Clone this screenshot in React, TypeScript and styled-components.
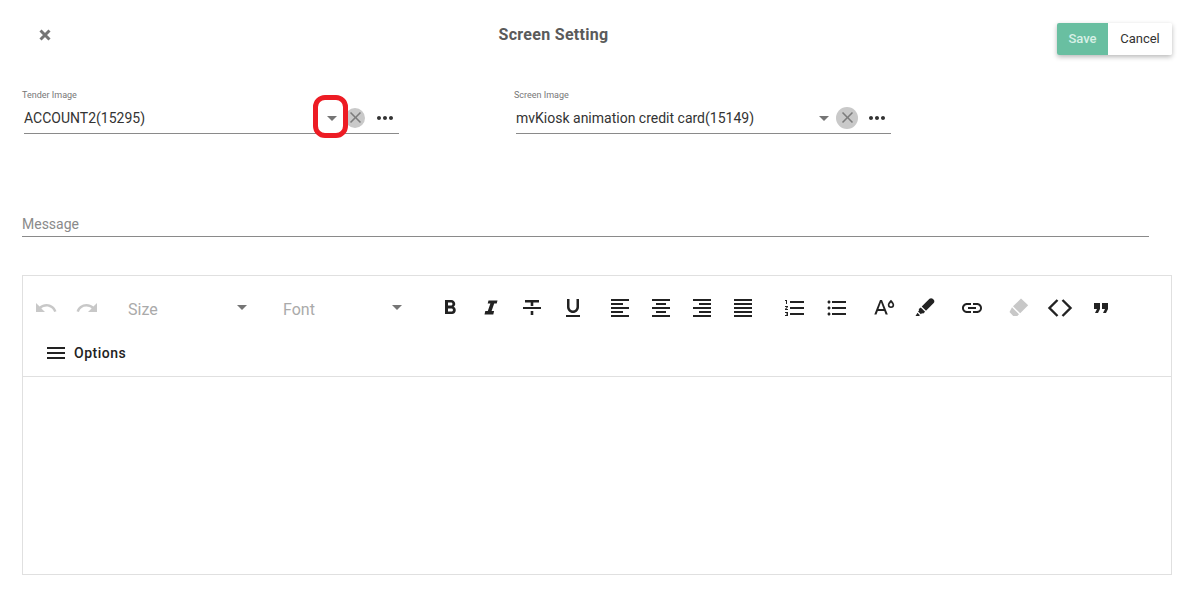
import React from "react";
import styled, { createGlobalStyle } from "styled-components";
import {
  MdClose, MdArrowDropDown, MdMoreHoriz, MdUndo, MdRedo, MdFormatBold,
  MdFormatUnderlined, MdFormatAlignLeft, MdFormatAlignCenter, MdFormatAlignRight, MdFormatAlignJustify,
  MdFormatListNumbered, MdFormatListBulleted, MdLink, MdFormatQuote, MdMenu,
} from "react-icons/md";

const Global = createGlobalStyle`
  html, body { margin: 0; padding: 0; background: #fff; }
  body { font-family: Roboto, "Liberation Sans", sans-serif; width: 1192px; height: 607px; overflow: hidden; }
`;

const Page = styled.div`
  width: 1192px; height: 607px; padding: 23px 20px 32px 22px; box-sizing: border-box;
  display: flex; flex-direction: column;
`;
const Header = styled.header`
  display: flex; align-items: flex-start; height: 32px;
`;
const CloseBtn = styled.div`
  width: 28px; height: 24px; display: flex; align-items: center; justify-content: center; color: #757575;
  padding-left: 17px; box-sizing: border-box;
  svg { flex: none; }
`;
const Title = styled.h1`
  flex: 1; margin: 0; padding-top: 1px; text-align: center; font-size: 16px; line-height: 22px; font-weight: 700; color: #5a5a5a;
  letter-spacing: .3px;
`;
const ButtonGroup = styled.div`
  display: flex; height: 32px; border-radius: 2px; box-shadow: 0 2px 5px rgba(0,0,0,.28);
`;
const GroupBtn = styled.button<{ $primary?: boolean }>`
  border: 0; padding: 0 0 2px; font-family: inherit; font-size: 13px; height: 32px;
  width: ${p => (p.$primary ? 51 : 64)}px;
  background: ${p => (p.$primary ? "#69bfa1" : "#fff")};
  color: ${p => (p.$primary ? "#d8f0e6" : "#333")};
  font-weight: ${p => (p.$primary ? 500 : 400)};
  border-radius: ${p => (p.$primary ? "2px 0 0 2px" : "0 2px 2px 0")};
`;
const FieldRow = styled.div`
  display: flex; gap: 115px; margin-top: 34px;
`;
const Field = styled.div`
  width: 377px; position: relative;
`;
const FieldLabel = styled.label`
  display: block; font-size: 9px; line-height: 12px; color: #777;
`;
const Control = styled.div`
  margin: 5px 0 0 2px; height: 27px; display: flex; align-items: center; border-bottom: 1px solid #8a8a8a;
`;
const Value = styled.div`
  flex: 1; font-size: 14px; color: #333; line-height: 20px; padding-bottom: 4px; white-space: nowrap;
`;
const Arrow = styled.span`
  display: flex; color: #757575; font-size: 24px; width: 24px; justify-content: center; margin-bottom: 3px;
`;
const ClearBubble = styled.span<{ $large?: boolean }>`
  width: ${p => (p.$large ? 22 : 20)}px; height: ${p => (p.$large ? 22 : 20)}px;
  margin: 0 ${p => (p.$large ? 0 : 1)}px 4px ${p => (p.$large ? 0 : 1)}px;
  border-radius: 50%; background: #c9c9c9; color: #7c7c7c; display: flex; align-items: center; justify-content: center;
  font-size: 19px;
`;
const More = styled.span`
  display: flex; justify-content: center; width: 28px; margin-left: 5px; font-size: 24px; color: #333; margin-bottom: 4px;
`;
const RedRing = styled.span`
  position: absolute; left: 291px; top: 6px; width: 35px; height: 43px; box-sizing: border-box;
  border: 5px solid #ed1c24; border-radius: 12px;
`;
const MessageField = styled.div`
  margin-top: 72px; width: 1127px; height: 31px; box-sizing: border-box; border-bottom: 1px solid #8a8a8a;
  font-size: 14px; color: #8a8a8a; line-height: 20px; padding-top: 8px;
`;
const Editor = styled.section`
  margin-top: 38px; flex: 1; border: 1px solid #e0e0e0; display: flex; flex-direction: column;
`;
const Toolbar = styled.div`
  height: 100px; border-bottom: 1px solid #e0e0e0; display: flex; flex-direction: column;
`;
const ToolRow = styled.div`
  height: 40px; margin-top: 12px; display: flex; align-items: center;
`;
const ToolIcon = styled.span<{ $w: number; $off?: boolean; $gap?: number }>`
  width: ${p => p.$w}px; margin-left: ${p => p.$gap ?? 0}px; display: flex; justify-content: center; flex: none;
  font-size: 24px; color: ${p => (p.$off ? "#c8c8c8" : "#222")};
`;
const Dropdown = styled.div<{ $w: number; $gap: number }>`
  width: ${p => p.$w}px; margin-left: ${p => p.$gap}px; flex: none; display: flex; align-items: center; justify-content: space-between;
  font-size: 16px; color: #aaa; padding-top: 3px; box-sizing: border-box;
  svg { color: #757575; font-size: 24px; margin-top: -5px; }
`;
const OptionsRow = styled.div`
  display: flex; align-items: center; gap: 6px; padding-left: 21px; margin-top: 9px; height: 32px;
  font-size: 14px; font-weight: 500; color: #222; letter-spacing: .5px;
  svg { font-size: 24px; }
`;
const Body = styled.div`flex: 1;`;

const HeavyClose = () => (
  <svg width="14" height="14" viewBox="0 0 14 14" fill="none" stroke="currentColor" strokeWidth="3">
    <path d="M2.500 2.500l9 9M11.500 2.500l-9 9" />
  </svg>
);
const ItalicIcon = () => (
  <svg width="24" height="24" viewBox="0 0 24 24" fill="currentColor">
    <path d="M9.500 4.500h9l-.8 3h-2.500l-2.600 7.500h2.500l-.8 3.500H5.500l.8-3.500h2.500l2.600-7.500H8.700z" />
  </svg>
);
const StrikeIcon = () => (
  <svg width="24" height="24" viewBox="0 0 24 24" fill="currentColor">
    <path d="M5 4h14v2.400h-5.700V10h-2.600V6.400H5V4zM3 11h18v2H3v-2zM10.700 15h2.600v4h-2.600v-4z" />
  </svg>
);
const FontColorIcon = () => (
  <svg width="24" height="24" viewBox="0 0 24 24" fill="currentColor">
    <path d="M8 4h2l5.800 14.500h-2.200l-1.300-3.600H5.800l-1.300 3.600H2.300L8 4zm-1.500 9h5L9 6.300 6.500 13z" />
    <path d="M19 3.800s-3.200 3-3.200 5a3.200 3.200 0 0 0 6.400 0c0-2-3.200-5-3.200-5zm0 6.600a1.600 1.600 0 0 1-1.600-1.600c0-.6.800-1.600 1.600-2.400.8.800 1.600 1.800 1.600 2.400a1.600 1.600 0 0 1-1.600 1.600z" />
  </svg>
);
const MarkerIcon = () => (
  <svg width="24" height="24" viewBox="0 0 24 24" fill="currentColor">
    <path d="M16.500 2.800c.9-.9 2.300-.9 3.200 0l1 1c.9.9.9 2.300 0 3.200L13 14.800 8.700 10.500l7.800-7.700zM7.800 11.500l4.300 4.300-1.800 1.800-1.400-.3-1 1-2.900-2.900 1-1-.2-1.400 2-1.500zM4.500 16.800l2.400 2.400-.8.800H2.500l2-3.200z" />
  </svg>
);
const EraserIcon = () => (
  <svg width="24" height="24" viewBox="0 0 24 24" fill="currentColor">
    <path d="M14 2.500l7.200 6.800-8 8L6 10.300l8-7.800zM5 11.300l7 7-1.700 1.700H6.200L2.500 16l2.500-4.700z" />
  </svg>
);
const CodeIcon = () => (
  <svg width="26" height="24" viewBox="0 0 26 24" fill="none" stroke="currentColor" strokeWidth="2.400">
    <path d="M10.500 4l-8 8 8 8M15.500 4l8 8-8 8" />
  </svg>
);

const Picker = ({ label, value, large, ring }: { label: string; value: string; large?: boolean; ring?: boolean }) => (
  <Field>
    <FieldLabel>{label}</FieldLabel>
    <Control>
      <Value>{value}</Value>
      <Arrow><MdArrowDropDown /></Arrow>
      <ClearBubble $large={large}><MdClose /></ClearBubble>
      <More><MdMoreHoriz /></More>
    </Control>
    {ring && <RedRing />}
  </Field>
);

export default function App() {
  return (
    <Page>
      <Global />
      <Header>
        <CloseBtn><HeavyClose /></CloseBtn>
        <Title>Screen Setting</Title>
        <ButtonGroup>
          <GroupBtn $primary>Save</GroupBtn>
          <GroupBtn>Cancel</GroupBtn>
        </ButtonGroup>
      </Header>
      <FieldRow>
        <Picker label="Tender Image" value="ACCOUNT2(15295)" ring />
        <Picker label="Screen Image" value="mvKiosk animation credit card(15149)" large />
      </FieldRow>
      <MessageField>Message</MessageField>
      <Editor>
        <Toolbar>
          <ToolRow>
            <ToolIcon $w={24} $gap={11} $off><MdUndo /></ToolIcon>
            <ToolIcon $w={24} $gap={17} $off><MdRedo /></ToolIcon>
            <Dropdown $w={126} $gap={29}>Size<MdArrowDropDown /></Dropdown>
            <Dropdown $w={126} $gap={29}>Font<MdArrowDropDown /></Dropdown>
            <ToolIcon $w={24} $gap={29}><MdFormatBold /></ToolIcon>
            <ToolIcon $w={24} $gap={17}><ItalicIcon /></ToolIcon>
            <ToolIcon $w={24} $gap={17}><StrikeIcon /></ToolIcon>
            <ToolIcon $w={24} $gap={17}><MdFormatUnderlined /></ToolIcon>
            <ToolIcon $w={24} $gap={23}><MdFormatAlignLeft /></ToolIcon>
            <ToolIcon $w={24} $gap={17}><MdFormatAlignCenter /></ToolIcon>
            <ToolIcon $w={24} $gap={17}><MdFormatAlignRight /></ToolIcon>
            <ToolIcon $w={24} $gap={17}><MdFormatAlignJustify /></ToolIcon>
            <ToolIcon $w={24} $gap={28}><MdFormatListNumbered /></ToolIcon>
            <ToolIcon $w={24} $gap={18}><MdFormatListBulleted /></ToolIcon>
            <ToolIcon $w={24} $gap={23}><FontColorIcon /></ToolIcon>
            <ToolIcon $w={24} $gap={17}><MarkerIcon /></ToolIcon>
            <ToolIcon $w={24} $gap={23}><MdLink /></ToolIcon>
            <ToolIcon $w={24} $gap={23} $off><EraserIcon /></ToolIcon>
            <ToolIcon $w={26} $gap={16}><CodeIcon /></ToolIcon>
            <ToolIcon $w={24} $gap={16}><MdFormatQuote /></ToolIcon>
          </ToolRow>
          <OptionsRow><MdMenu />Options</OptionsRow>
        </Toolbar>
        <Body />
      </Editor>
    </Page>
  );
}
